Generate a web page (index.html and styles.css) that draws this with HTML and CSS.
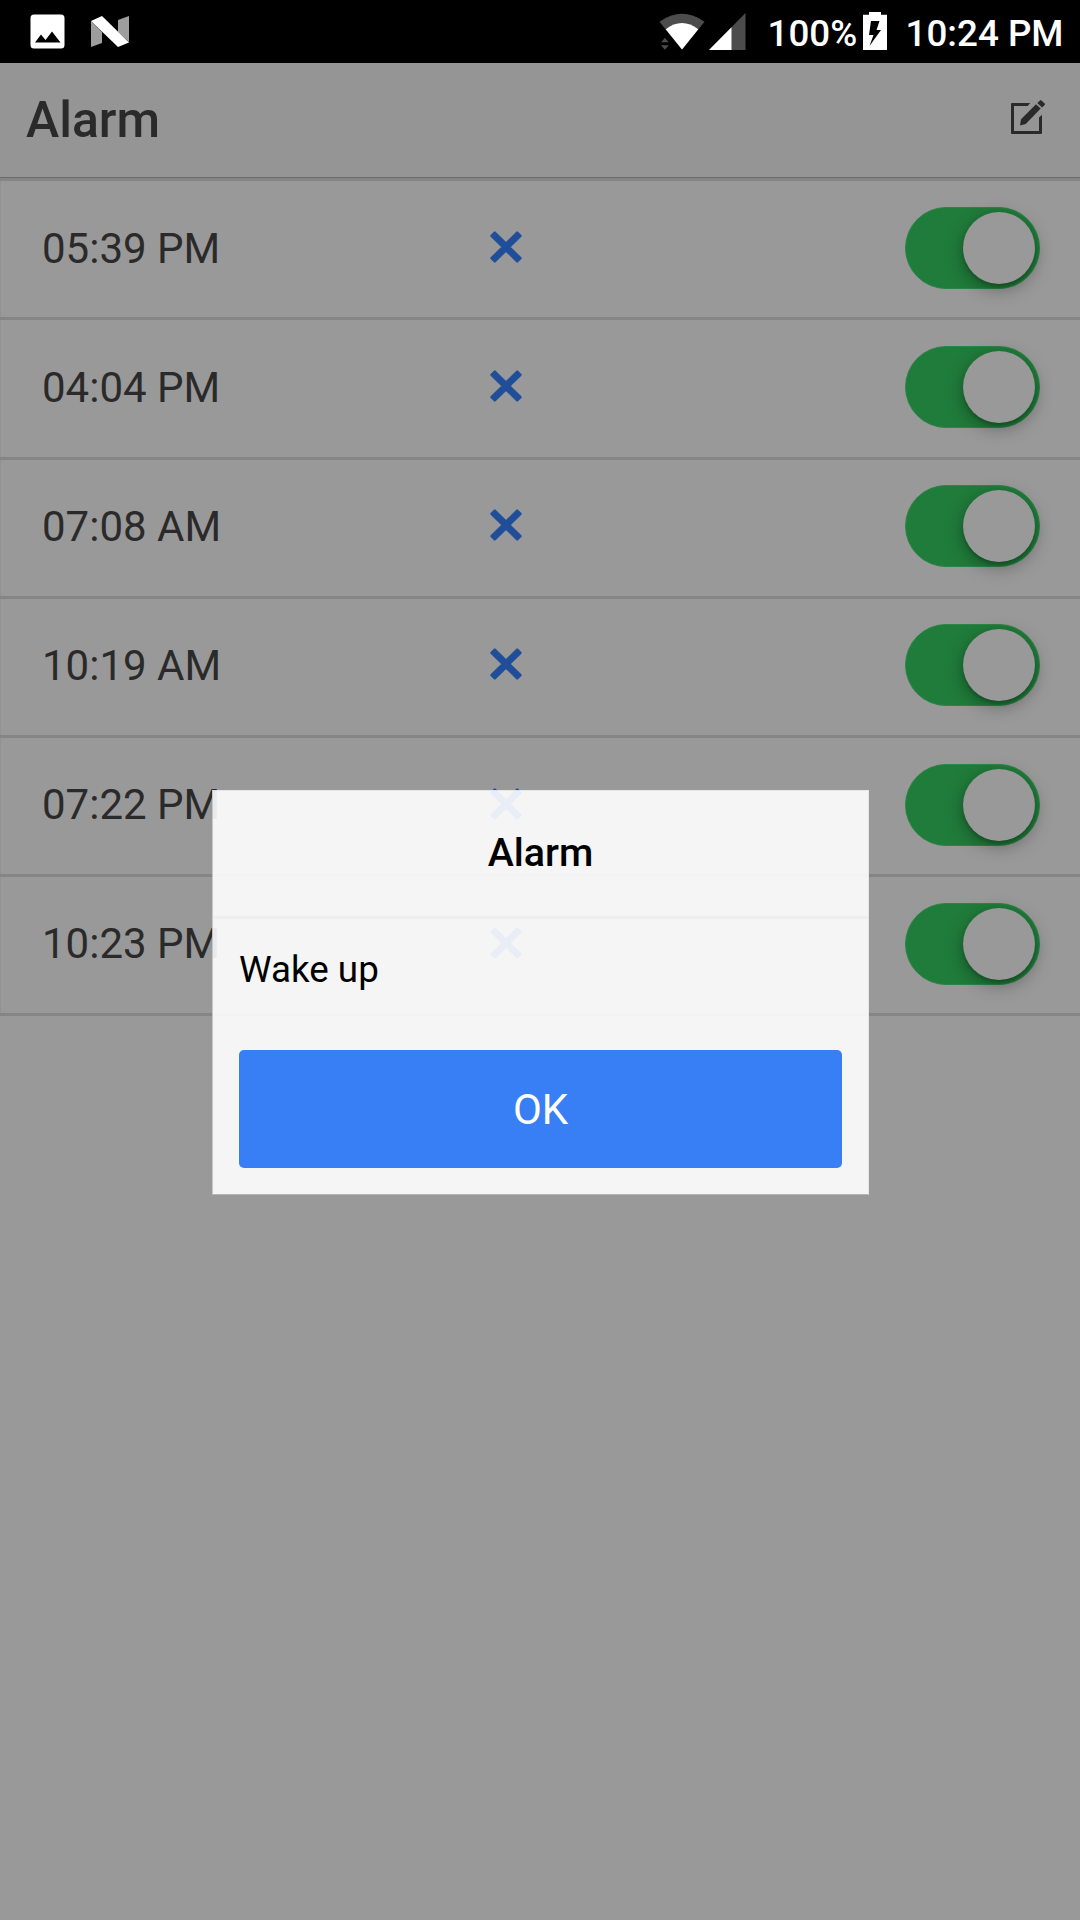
FILE: index.html
```html
<!DOCTYPE html>
<html lang="en">
<head>
<meta charset="utf-8">
<title>Alarm</title>
<link rel="stylesheet" href="styles.css">
</head>
<body>
<svg class="defs" aria-hidden="true">
  <symbol id="close" viewBox="0 0 32 32"><path d="M4.800 1.500 16 12.700 27.200 1.500 30.500 4.800 19.300 16 30.500 27.200 27.200 30.500 16 19.300 4.800 30.500 1.500 27.200 12.700 16 1.500 4.800z" stroke-width="2.400" stroke-linejoin="round"/></symbol>
</svg>
<div class="status">
  <div class="status-left">
    <svg width="35" height="36" viewBox="0 0 35 36"><path fill="#fff" fill-rule="evenodd" d="M4 .5H31A3.500 3.500 0 0 1 34.500 4V31A3.500 3.500 0 0 1 31 34.500H4A3.500 3.500 0 0 1 .5 31V4A3.500 3.500 0 0 1 4 .5zM5 28.600H30.500L22 17.400 15.500 26 11 20.500z"/></svg>
    <svg width="38" height="32" viewBox="0 0 38 32"><path fill="#9e9e9e" d="M0 5 11 16V27L0 31zM27 4 38 0V26L27 16z"/><path fill="#fff" d="M0 5 11 0 38 26.500 27 31z"/></svg>
  </div>
  <div class="status-right">
    <svg class="wifi" width="47" height="38" viewBox="0 0 47 38"><path fill="#4c4c4c" d="M.5 9.700Q23-6 45.500 9.700L23 37.500z"/><path fill="#fff" d="M6.700 17.300Q23 4.700 39.300 17.300L23 37.500z"/><path fill="#4c4c4c" d="M2 30.300 5.900 26 9.800 30.300zM2 33.300H9.800L5.900 37.700z"/></svg>
    <svg class="signal" width="37" height="37" viewBox="0 0 37 37"><path fill="#4c4c4c" d="M0 37 36.500 0V37z"/><path fill="#fff" d="M0 37 22.500 14.300V37z"/></svg>
    <span class="percent">100%</span>
    <svg class="battery" width="24" height="38" viewBox="0 0 24 38"><path fill="#fff" fill-rule="evenodd" d="M0 2.700H6V0H18V2.700H24V38H0zM8 9 6 23H10.500L6.500 34 18 18H13.500L16.500 9z"/></svg>
    <span class="clock">10:24 PM</span>
  </div>
</div>
<header class="bar">
  <h1>Alarm</h1>
  <svg width="36" height="36" viewBox="0 0 36 36"><path fill="#2a2a2a" d="M2 4H20.300L17.600 7H4V32H29V18.500L32 15.800V34Q32 35 31 35H2Q1 35 1 34V5Q1 4 2 4zM10 26.500 11 20.300 26 5.200 30.700 9.500 15.700 25zM27.300 4 30 1.400Q30.700 .8 31.400 1.400L34.700 4.600Q35.300 5.300 34.700 6L32 8.500z"/></svg>
</header>
<main class="list">
  <div class="item"><span>05:39 PM</span><svg class="close"><use href="#close"/></svg><div class="toggle"><i></i></div></div>
  <div class="item"><span>04:04 PM</span><svg class="close"><use href="#close"/></svg><div class="toggle"><i></i></div></div>
  <div class="item"><span>07:08 AM</span><svg class="close"><use href="#close"/></svg><div class="toggle"><i></i></div></div>
  <div class="item"><span>10:19 AM</span><svg class="close"><use href="#close"/></svg><div class="toggle"><i></i></div></div>
  <div class="item"><span>07:22 PM</span><svg class="close"><use href="#close"/></svg><div class="toggle"><i></i></div></div>
  <div class="item"><span>10:23 PM</span><svg class="close"><use href="#close"/></svg><div class="toggle"><i></i></div></div>
</main>
<div class="popup-container">
  <section class="popup">
    <h2>Alarm</h2>
    <p>Wake up</p>
    <button>OK</button>
  </section>
</div>
</body>
</html>
```
FILE: styles.css
```css
* { box-sizing: border-box; }
body {
  margin: 0;
  height: 1920px;
  overflow: hidden;
  position: relative;
  background: #999;
  color: #2a2a2a;
  font-family: Roboto, sans-serif;
}
svg { display: block; flex: none; }
.defs { position: absolute; width: 0; height: 0; }
h1, h2, p { margin: 0; }

.status {
  height: 63px;
  background: #000;
  color: #fff;
  display: flex;
  justify-content: space-between;
  font-size: 36.75px;
  font-weight: 500;
  line-height: 43px;
}
.status-left { display: flex; gap: 26px; padding: 14px 0 0 30px; }
.status-left svg + svg { margin-top: 2px; }
.status-right { display: flex; padding: 12px 16.500px 0 0; }
.wifi { margin-right: 3px; }
.signal { margin: 1px 22px 0 0; }
.percent { width: 95px; white-space: nowrap; }
.battery { margin-right: 19px; }

.bar {
  height: 115px;
  background: #959595;
  border-bottom: 1px solid #6b6b6b;
  display: flex;
  justify-content: space-between;
  padding: 36px 34px 0 26px;
}
.bar h1 { padding-top: 1px; font-size: 50px; font-weight: 500; line-height: 40px; }

.list { padding-top: .4px; border-bottom: 3px solid #858585; }
.item {
  height: 139.100px;
  border-top: 3px solid #858585;
  box-shadow: inset 1px 0 #929292;
  display: grid;
  grid-template-columns: 448px 1fr 135px;
  align-items: center;
  padding: 0 40px 2.600px 42px;
  font-size: 42px;
}
.close { width: 32px; height: 32px; margin-bottom: 2px; fill: #214e99; stroke: #214e99; }
.toggle {
  height: 82px;
  border-radius: 41px;
  background: #207c3a;
  border: 1px solid #2b8545;
  padding: 4px;
  display: flex;
  justify-content: flex-end;
}
.toggle i {
  width: 72px;
  height: 72px;
  border-radius: 50%;
  background: #999;
  box-shadow: 0 5px 18px rgba(0,0,0,.35), 0 3px 3px rgba(0,0,0,.15);
}

.popup-container {
  position: absolute;
  inset: 0;
  display: flex;
  justify-content: center;
  align-items: flex-start;
  padding-top: 790px;
}
.popup {
  width: 657px;
  height: 405px;
  margin-left: 1px;
  background: rgba(255,255,255,.9);
  border: 1px solid rgba(153,153,153,.15);
  border-bottom-color: rgba(153,153,153,.7);
  border-left-color: rgba(153,153,153,.5);
  color: #000;
}
.popup h2 {
  height: 128px;
  border-bottom: 3px solid #eee;
  padding-top: 39px;
  font-size: 39.4px;
  font-weight: 500;
  line-height: 46px;
  text-align: center;
}
.popup p { height: 131px; padding: 29px 26px 0; font-size: 36.75px; line-height: 43px; }
.popup button {
  display: block;
  width: 603px;
  height: 118px;
  margin-left: 26px;
  padding: 1px 0 0;
  border: 0;
  border-radius: 5px;
  background: #387ef5;
  color: #fff;
  font: 42px/118px Roboto, sans-serif;
}
```
